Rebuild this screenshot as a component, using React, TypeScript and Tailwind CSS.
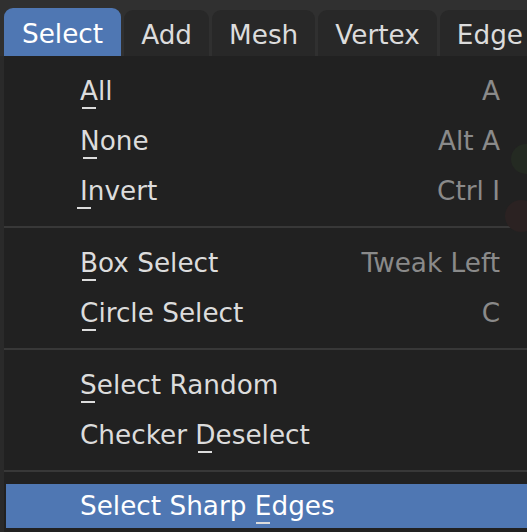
import React from 'react';

type Item = { label: string; key?: number; shortcut?: string; active?: boolean };

const groups: Item[][] = [
  [
    { label: 'All', key: 0, shortcut: 'A' },
    { label: 'None', key: 0, shortcut: 'Alt A' },
    { label: 'Invert', key: 0, shortcut: 'Ctrl I' },
  ],
  [
    { label: 'Box Select', key: 0, shortcut: 'Tweak Left' },
    { label: 'Circle Select', key: 0, shortcut: 'C' },
  ],
  [
    { label: 'Select Random', key: 0 },
    { label: 'Checker Deselect', key: 8 },
  ],
  [{ label: 'Select Sharp Edges', key: 13, active: true }],
];

const tabs = ['Select', 'Add', 'Mesh', 'Vertex', 'Edge'];

// letter with blender-style underscore mnemonic
const Label = ({ text, idx }: { text: string; idx?: number }) => {
  if (idx === undefined) return <span>{text}</span>;
  return (
    <span>
      {text.slice(0, idx)}
      <span className="relative inline-block">
        {text[idx]}
        <span className="absolute left-1/2 top-[29px] h-[2px] w-[14px] -translate-x-1/2 bg-[#dcdcdc]" />
      </span>
      {text.slice(idx + 1)}
    </span>
  );
};

export default function App() {
  return (
    <div
      className="relative h-[532px] w-[527px] overflow-hidden bg-[#2a2a2a] text-[26.3px] leading-none"
      style={{ fontFamily: '"DejaVu Sans", "Liberation Sans", sans-serif' }}
    >
      {/* header with tabs */}
      <div className="flex h-[56px] items-end gap-[3px] bg-[#303030] pl-[4px]">
        {tabs.map((t, i) => (
          <div
            key={t}
            className={`flex shrink-0 items-center pt-[4px] ${
              i === 0
                ? 'h-[48px] rounded-t-[9px] bg-[#4f77b3] px-[18px] text-white'
                : 'h-[46px] rounded-t-[9px] bg-[#282828] px-[17px] pt-[2px] text-[#dcdcdc]'
            }`}
          >
            {t}
          </div>
        ))}
      </div>

      {/* menu */}
      <div className="relative ml-[4px] h-[476px] bg-[#212121] pt-[10px]">
        {/* faint gizmo showing through */}
        <div className="absolute right-[-14px] top-[88px] h-[30px] w-[30px] rounded-full bg-[#242a22]" />
        <div className="absolute right-[-10px] top-[144px] h-[32px] w-[32px] rounded-full bg-[#2b2222]" />

        {groups.map((g, gi) => (
          <div key={gi}>
            {gi > 0 && (
              <div className="flex h-[22px] items-center">
                <div className="h-[2px] w-full bg-[#383838]" />
              </div>
            )}
            {g.map((it) =>
              it.active ? (
                <div key={it.label} className="h-[50px] pl-[2px] pt-[2px]">
                  <div className="flex h-[44px] items-center bg-[#4f77b3] pl-[74px] text-white">
                    <Label text={it.label} idx={it.key} />
                  </div>
                </div>
              ) : (
                <div
                  key={it.label}
                  className="relative flex h-[50px] items-center justify-between pl-[76px] pr-[27px]"
                >
                  <span className="text-[#dcdcdc]">
                    <Label text={it.label} idx={it.key} />
                  </span>
                  {it.shortcut && <span className="text-[#8a8a8a]">{it.shortcut}</span>}
                </div>
              )
            )}
          </div>
        ))}
      </div>
    </div>
  );
}
